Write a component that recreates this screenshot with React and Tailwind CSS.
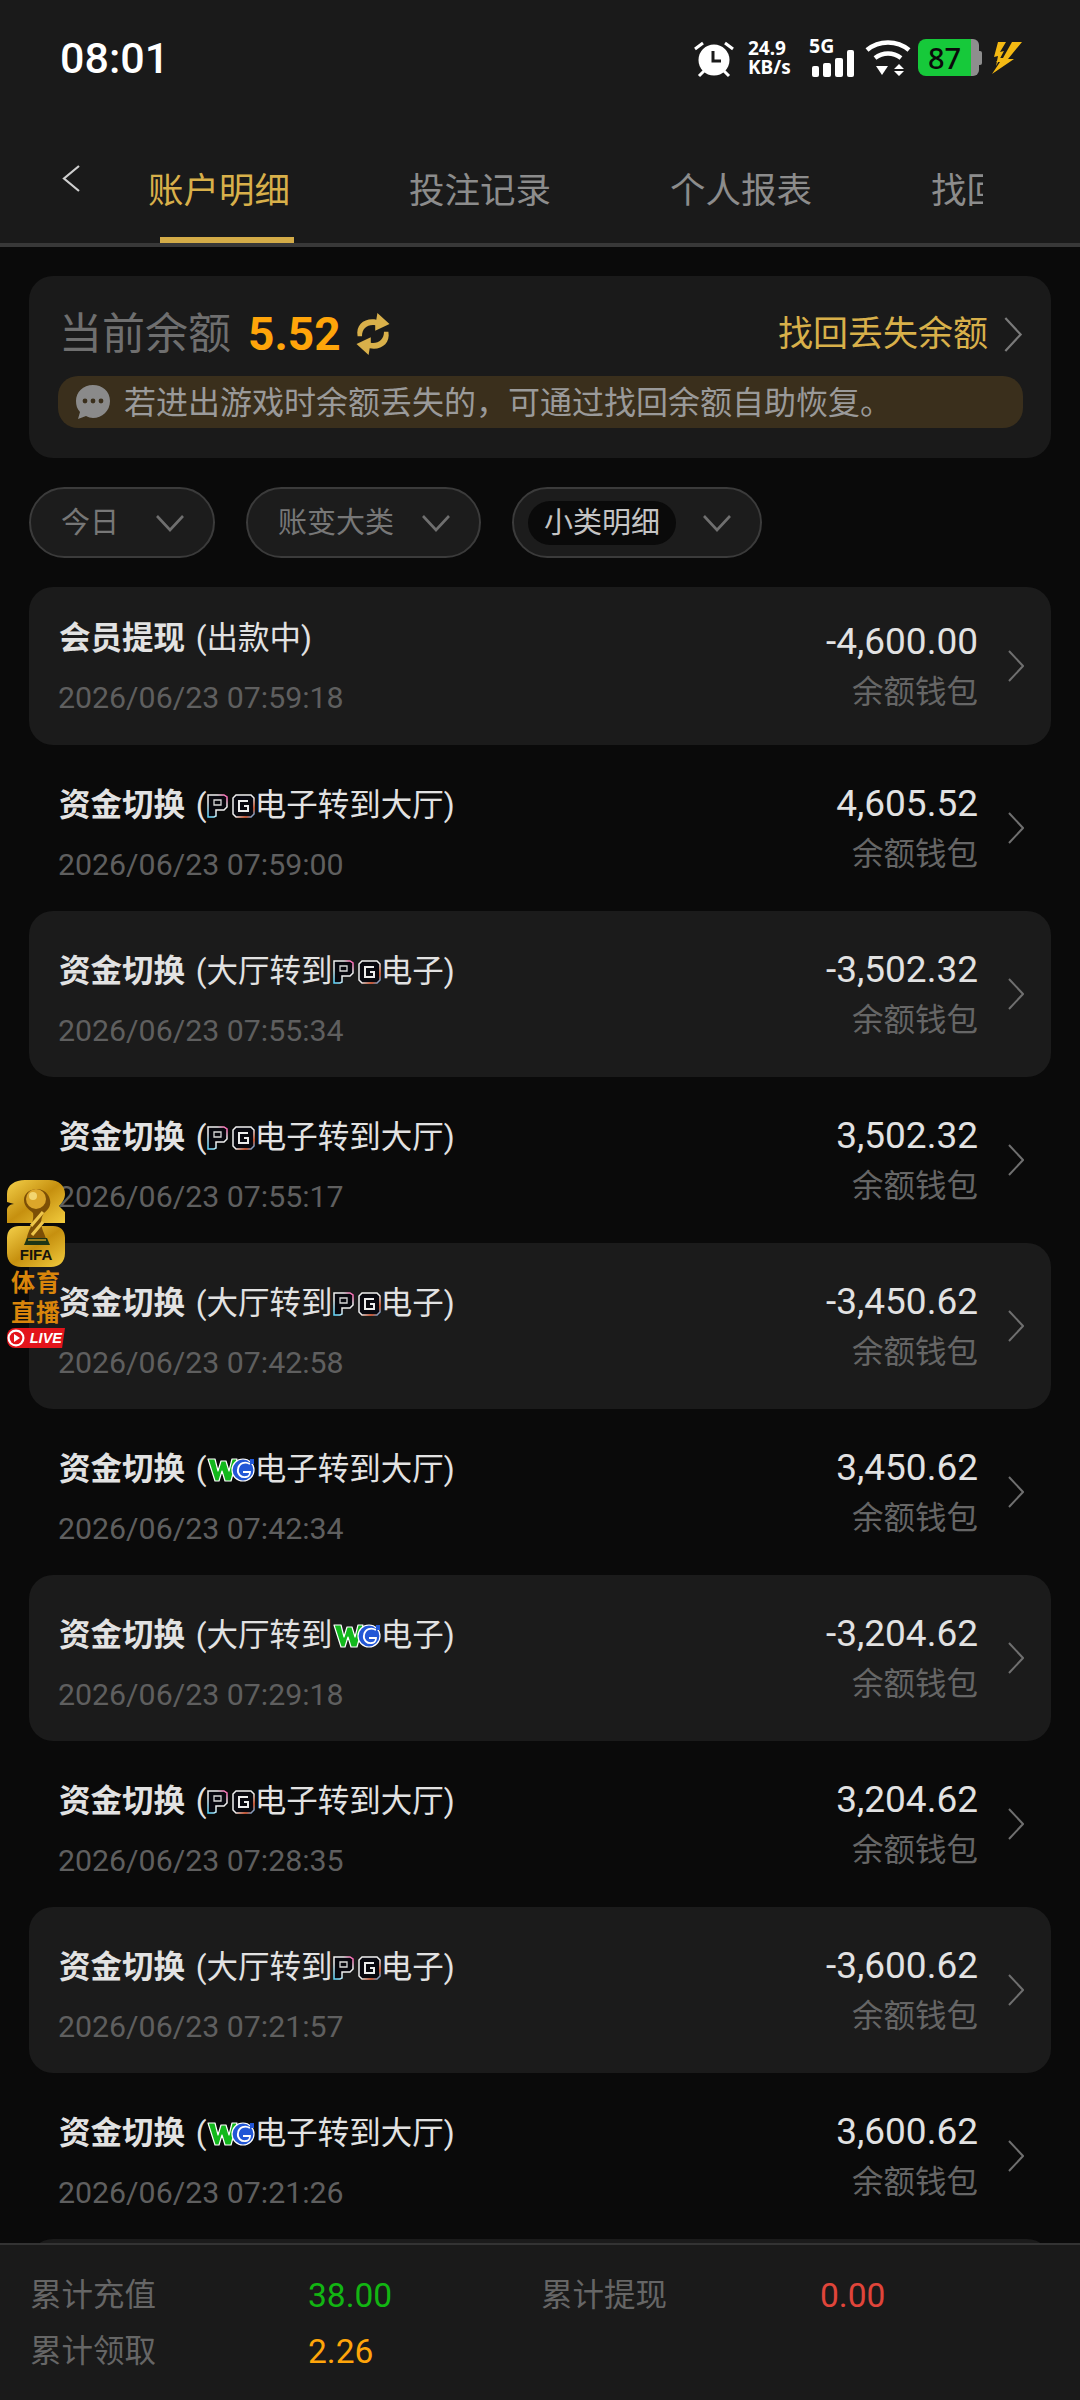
import React from "react";

function PG() {
  return (
    <svg width="48" height="24" viewBox="0 0 48 24" className="inline-block align-[-2px]">
      <defs>
        <linearGradient id="pgp" x1="0" y1="1" x2="1" y2="0">
          <stop offset="0" stopColor="#58d6ff" />
          <stop offset="0.35" stopColor="#f0f0f0" />
          <stop offset="0.75" stopColor="#f0f0f0" />
          <stop offset="1" stopColor="#ff4fa8" />
        </linearGradient>
        <linearGradient id="pgq" x1="0" y1="0" x2="1" y2="1">
          <stop offset="0" stopColor="#f0f0f0" />
          <stop offset="0.55" stopColor="#f0f0f0" />
          <stop offset="0.8" stopColor="#ff6a3c" />
          <stop offset="1" stopColor="#4fb8ff" />
        </linearGradient>
      </defs>
      <path d="M1 1h16l3 2v10l-3 3H9v6l-2 1H1z" fill="#08080f" stroke="url(#pgp)" strokeWidth="1.5" />
      <path d="M7 6h7v5H7z" fill="none" stroke="#d8d8d8" strokeWidth="1.3" />
      <path d="M29 1h15l3 3v16l-3 3H29l-3-3V4z" fill="#08080f" stroke="url(#pgq)" strokeWidth="1.5" />
      <path d="M41 7h-9v10h9v-5h-4" fill="none" stroke="#ececec" strokeWidth="2" />
    </svg>
  );
}

function WG() {
  return (
    <svg width="48" height="26" viewBox="0 0 48 26" className="inline-block align-[-3px]">
      <path d="M1 2h7l3 12 3-10h5l3 10 3-12h5l-6 22h-6l-3-10-3 10H8z" fill="#12b81c" stroke="#fff" strokeWidth="1.2" strokeLinejoin="round" />
      <circle cx="36" cy="13" r="11" fill="#2257d6" stroke="#fff" strokeWidth="1.2" />
      <path d="M43 7c-5-3-11-1-12 5-1 5 3 9 8 8 2 0 4-2 4-5h-7" fill="none" stroke="#fff" strokeWidth="1.8" />
      <path d="M43 2h4v5h-4z" fill="#2257d6" />
    </svg>
  );
}

function Chevron({ className = "" }) {
  return (
    <svg viewBox="0 0 16 32" fill="none" stroke="currentColor" strokeWidth="2" className={className}>
      <path d="M1 1l14 15L1 31" />
    </svg>
  );
}

function Pill({ label, chip, w }) {
  return (
    <div className={`${w} h-[71px] rounded-full border-2 border-[#3b3b3b] bg-[#1c1c1c] flex items-center justify-between pl-[30px] pr-[28px]`}>
      {chip ? (
        <span className="-ml-[16px] h-[44px] px-[16px] rounded-full bg-[#0a0a0a] flex items-center pt-[2px] text-[29px] text-[#c4c4c4]">{label}</span>
      ) : (
        <span className="pt-[2px] text-[29px] text-[#777777]">{label}</span>
      )}
      <svg width="30" height="18" viewBox="0 0 30 18" fill="none" stroke="#6f6f6f" strokeWidth="2.6">
        <path d="M2 2l13 14L28 2" />
      </svg>
    </div>
  );
}

const rows = [
  { kind: "note", amt: "-4,600.00", date: "2026/06/23 07:59:18" },
  { logo: "pg", dir: "out", amt: "4,605.52", date: "2026/06/23 07:59:00" },
  { logo: "pg", dir: "in", amt: "-3,502.32", date: "2026/06/23 07:55:34" },
  { logo: "pg", dir: "out", amt: "3,502.32", date: "2026/06/23 07:55:17" },
  { logo: "pg", dir: "in", amt: "-3,450.62", date: "2026/06/23 07:42:58" },
  { logo: "wg", dir: "out", amt: "3,450.62", date: "2026/06/23 07:42:34" },
  { logo: "wg", dir: "in", amt: "-3,204.62", date: "2026/06/23 07:29:18" },
  { logo: "pg", dir: "out", amt: "3,204.62", date: "2026/06/23 07:28:35" },
  { logo: "pg", dir: "in", amt: "-3,600.62", date: "2026/06/23 07:21:57" },
  { logo: "wg", dir: "out", amt: "3,600.62", date: "2026/06/23 07:21:26" },
];

function Row({ r, i }) {
  const Logo = r.logo === "wg" ? WG : PG;
  return (
    <div className={`${i === 0 ? "h-[158px]" : "h-[166px]"} shrink-0 flex items-center pl-[30px] pr-[27px] rounded-[24px] ${i % 2 === 0 ? "bg-[#1b1b1b]" : ""}`}>
      <div className={`flex-1 ${i === 0 ? "mt-[5px]" : "mt-[14px]"}`}>
        <div className="text-[31.5px] leading-[42px] text-[#e2e2e2] whitespace-nowrap">
          {r.kind === "note" ? (
            <>
              <span className="font-bold mr-[3px]">会员提现</span> (出款中)
            </>
          ) : r.dir === "out" ? (
            <>
              <span className="font-bold mr-[3px]">资金切换</span> (<Logo />电子转到大厅)
            </>
          ) : (
            <>
              <span className="font-bold mr-[3px]">资金切换</span> (大厅转到<Logo />电子)
            </>
          )}
        </div>
        <div className="mt-[17px] -ml-[1px] text-[30.3px] leading-[42px] text-[#5f5f5f]">{r.date}</div>
      </div>
      <div className="text-right mt-[3px]">
        <div className="text-[37px] leading-[44px] text-[#e2e2e2]">{r.amt}</div>
        <div className="mt-[7px] text-[31.5px] leading-[44px] text-[#666666]">余额钱包</div>
      </div>
      <Chevron className="ml-[30px] w-[16px] h-[32px] text-[#6f6f6f]" />
    </div>
  );
}

function FifaBadge() {
  return (
    <div className="absolute left-[7px] top-[1180px] w-[58px] z-10 flex flex-col items-center">
      <div className="relative w-[58px] h-[87px]">
        <svg width="58" height="87" viewBox="0 0 58 87" className="absolute inset-0">
          <defs>
            <linearGradient id="gold" x1="0" y1="0" x2="1" y2="1">
              <stop offset="0" stopColor="#f4d04a" />
              <stop offset="0.5" stopColor="#c6900f" />
              <stop offset="1" stopColor="#f2cc3e" />
            </linearGradient>
          </defs>
          <path d="M0 14C0 5 8 0 18 0h24c10 0 16 6 16 14 0 5-3 9-6 12l6 6v11H0V30c0-3 3-6 7-6l-7-2z" fill="url(#gold)" />
          <path d="M0 58c0-8 5-12 12-12h34c7 0 12 4 12 12v15c0 9-6 14-14 14H14C6 87 0 82 0 73z" fill="url(#gold)" />
          <path d="M30 9c-8 0-13 5-13 11 0 7 6 10 9 13 1 5-1 12-4 18-2 5-3 9-3 13h21c0-4-2-8-4-13-2-6-3-12 1-18 5-4 7-8 6-13-1-6-6-11-13-11z" fill="#7c4f06" />
          <circle cx="29" cy="19" r="10" fill="#dca62a" />
          <circle cx="26" cy="16" r="4" fill="#f2d571" />
          <path d="M24 46l12-14M25 55l11-13" stroke="#eec64a" strokeWidth="3.2" />
          <path d="M20 58h20l3 7H17z" fill="#1d3515" />
          <path d="M21 60h18" stroke="#c59a25" strokeWidth="1.5" />
        </svg>
        <span className="absolute left-0 right-0 top-[67px] text-center text-[15px] leading-[16px] font-bold font-['Liberation_Sans',sans-serif] text-[#14130c]">FIFA</span>
      </div>
      <div className="mt-[1px] text-[24px] leading-[30px] font-bold text-[#d9850b] text-center tracking-[1px] whitespace-nowrap">体育<br />直播</div>
      <div className="relative w-[58px] h-[20px] bg-[#e3141b] rounded-l-[8px] [clip-path:polygon(0_0,100%_0,95%_100%,0_100%)] flex items-center justify-end pr-[3px]">
        <svg width="18" height="18" viewBox="0 0 18 18" className="absolute left-0 top-[1px]">
          <circle cx="9" cy="9" r="8.5" fill="#fff" />
          <circle cx="9" cy="9" r="6.3" fill="#e3141b" />
          <path d="M7 5l6 4-6 4z" fill="#fff" />
        </svg>
        <span className="text-[14.5px] leading-[16px] font-bold italic font-['Liberation_Sans',sans-serif] text-white">LIVE</span>
      </div>
    </div>
  );
}

function StatusIcons() {
  return (
    <div className="absolute left-[694px] top-[39px] flex items-start">
      <svg width="40" height="38" viewBox="0 0 40 38" className="mt-[1px]">
        <circle cx="20" cy="20" r="15.5" fill="#fff" />
        <path d="M19 11v10h8" fill="none" stroke="#1a1a1a" strokeWidth="3" />
        <path d="M1 9l8-6M39 9l-8-6M5 36l5-5M35 36l-5-5" stroke="#fff" strokeWidth="3" />
      </svg>
      <div className="ml-[14px] w-[48px] font-['Noto_Sans',sans-serif] font-bold text-white text-[19px] leading-[19px]">
        <div>24.9</div>
        <div>KB/s</div>
      </div>
      <div className="ml-[13px] relative w-[46px] h-[38px]">
        <span className="absolute left-0 top-[-3px] font-['Noto_Sans',sans-serif] font-bold text-white text-[19.5px] leading-[20px]">5G</span>
        <svg width="46" height="38" viewBox="0 0 46 38" className="absolute inset-0">
          <rect x="3" y="27" width="7" height="11" rx="2" fill="#fff" />
          <rect x="14" y="24" width="8" height="14" rx="2" fill="#fff" />
          <rect x="26" y="19" width="8" height="19" rx="2" fill="#fff" />
          <rect x="38" y="11" width="7" height="27" rx="2" fill="#fff" />
        </svg>
      </div>
      <svg width="46" height="38" viewBox="0 0 46 38" className="ml-[10px]" fill="none" stroke="#fff" strokeWidth="4.6">
        <path d="M2 11c12-10 30-10 42 0" />
        <path d="M10 19c8-6 18-6 26 0" />
        <path d="M11 27h12l-6 9z" fill="#fff" stroke="none" />
        <path d="M34 25l5 5H29zM29 32h10l-5 5z" fill="#fff" stroke="none" />
      </svg>
      <div className="ml-[7px] w-[64px] h-[37px] flex">
        <div className="w-[53px] h-full bg-[#16c93a] rounded-l-[8px] flex items-center justify-center font-['Noto_Sans',sans-serif] font-medium text-[29px] leading-none text-[#0a0a0a]">87</div>
        <div className="w-[8px] h-full bg-[#8e8e8e] rounded-r-[6px]"></div>
        <div className="w-[3px] h-[14px] mt-[12px] bg-[#8e8e8e] rounded-r-[2px]"></div>
      </div>
      <svg width="30" height="32" viewBox="0 0 30 32" className="ml-[10px] mt-[3px]">
        <path d="M6 0h8L8 10l4-1L4 24 6 14l-4 1zM20 0h10L16 17h6L0 32l8-12H4l4-4h3z" fill="#f4b913" />
      </svg>
    </div>
  );
}

export default function App() {
  return (
    <div className="relative w-[1080px] h-[2400px] overflow-hidden flex flex-col bg-[#0a0a0a] font-['Roboto','Noto_Sans_CJK_SC',sans-serif]">
      <header className="shrink-0 h-[247px] bg-[#1a1a1a] relative border-b-4 border-[#383838]">
        <div className="pl-[60px] pt-[33px] text-[43px] leading-[50px] font-medium text-white">08:01</div>
        <StatusIcons />
        <div className="absolute left-0 top-[160px] w-full h-[83px] flex">
          <svg viewBox="0 0 18 27" fill="none" stroke="#cfcfcf" strokeWidth="2.2" className="ml-[62px] mt-[5px] w-[18px] h-[27px]">
            <path d="M17 1L2 13.5 17 26" />
          </svg>
          <div className="ml-[9px] w-[894px] overflow-hidden flex">
            {["账户明细", "投注记录", "个人报表", "找回记录"].map((t, i) => (
              <div key={t} className={`shrink-0 w-[261px] h-[83px] pl-[59px] pt-[9px] text-[35.5px] leading-[44px] relative ${i === 0 ? "text-[#d8b04a]" : "text-[#8c8c8c]"}`}>
                {t}
                {i === 0 && <div className="absolute left-[71px] top-[77px] w-[134px] h-[7px] bg-[#d4ac48]"></div>}
              </div>
            ))}
          </div>
        </div>
      </header>

      <main className="flex-1 min-h-0 overflow-hidden px-[29px] pt-[29px]">
        <section className="h-[182px] rounded-[24px] bg-[#1a1a1a] pt-[28px] px-[30px]">
          <div className="flex items-center h-[60px]">
            <span className="text-[43px] leading-[60px] text-[#6f6f6f]">当前余额</span>
            <span className="ml-[17px] text-[46px] font-bold text-[#ffa50a]">5.52</span>
            <svg width="38" height="44" viewBox="4 2 30 40" className="ml-[13px]" fill="none">
              <path d="M5 24C3 13 12 7 22 9l1-6 11 10-13 6v-5c-7-1-12 3-12 10z" fill="#d9b04a" />
              <path d="M33 20c2 11-7 17-17 15l-1 6L4 31l13-6v5c7 1 12-3 12-10z" fill="#d9b04a" />
            </svg>
            <span className="ml-auto pt-[2px] text-[35px] text-[#d8b04a]">找回丢失余额</span>
            <Chevron className="ml-[15px] -mr-[2px] w-[20px] h-[35px] text-[#7a7a7a]" />
          </div>
          <div className="mt-[12px] -ml-[1px] w-[965px] h-[52px] rounded-[20px] bg-[#3a2f1c] flex items-center pl-[17px]">
            <svg width="36" height="36" viewBox="0 0 36 36" className="shrink-0">
              <path d="M18 1C8 1 1 8 1 17c0 4 1 8 4 11l-2 7 8-3c2 1 5 2 7 2 9 0 17-7 17-17S27 1 18 1z" fill="#8a8a8a" />
              <circle cx="10" cy="17" r="2.4" fill="#3a2f1c" />
              <circle cx="18" cy="17" r="2.4" fill="#3a2f1c" />
              <circle cx="26" cy="17" r="2.4" fill="#3a2f1c" />
            </svg>
            <span className="ml-[13px] pt-[2px] text-[32px] text-[#9a9a9a] whitespace-nowrap">若进出游戏时余额丢失的，可通过找回余额自助恢复。</span>
          </div>
        </section>

        <div className="mt-[29px] flex gap-[31px]">
          <Pill label="今日" w="w-[186px]" />
          <Pill label="账变大类" w="w-[235px]" />
          <Pill label="小类明细" chip w="w-[250px]" />
        </div>

        <div className="mt-[29px] flex flex-col">
          {rows.map((r, i) => (
            <Row key={r.date} r={r} i={i} />
          ))}
          <div className="h-[166px] shrink-0 rounded-[24px] bg-[#1b1b1b]"></div>
        </div>
      </main>

      <footer className="shrink-0 h-[157px] bg-[#1a1a1a] border-t-2 border-[#333333] pl-[30px] pt-[23px] grid grid-cols-[278px_233px_279px_1fr] grid-rows-[56px_56px] items-center text-[31.5px]">
        <span className="text-[#666666]">累计充值</span>
        <span className="text-[33.5px] text-[#12b512]">38.00</span>
        <span className="text-[#666666]">累计提现</span>
        <span className="text-[33.5px] text-[#e0453a]">0.00</span>
        <span className="text-[#666666]">累计领取</span>
        <span className="text-[33.5px] text-[#ffa50a]">2.26</span>
      </footer>

      <FifaBadge />
    </div>
  );
}
